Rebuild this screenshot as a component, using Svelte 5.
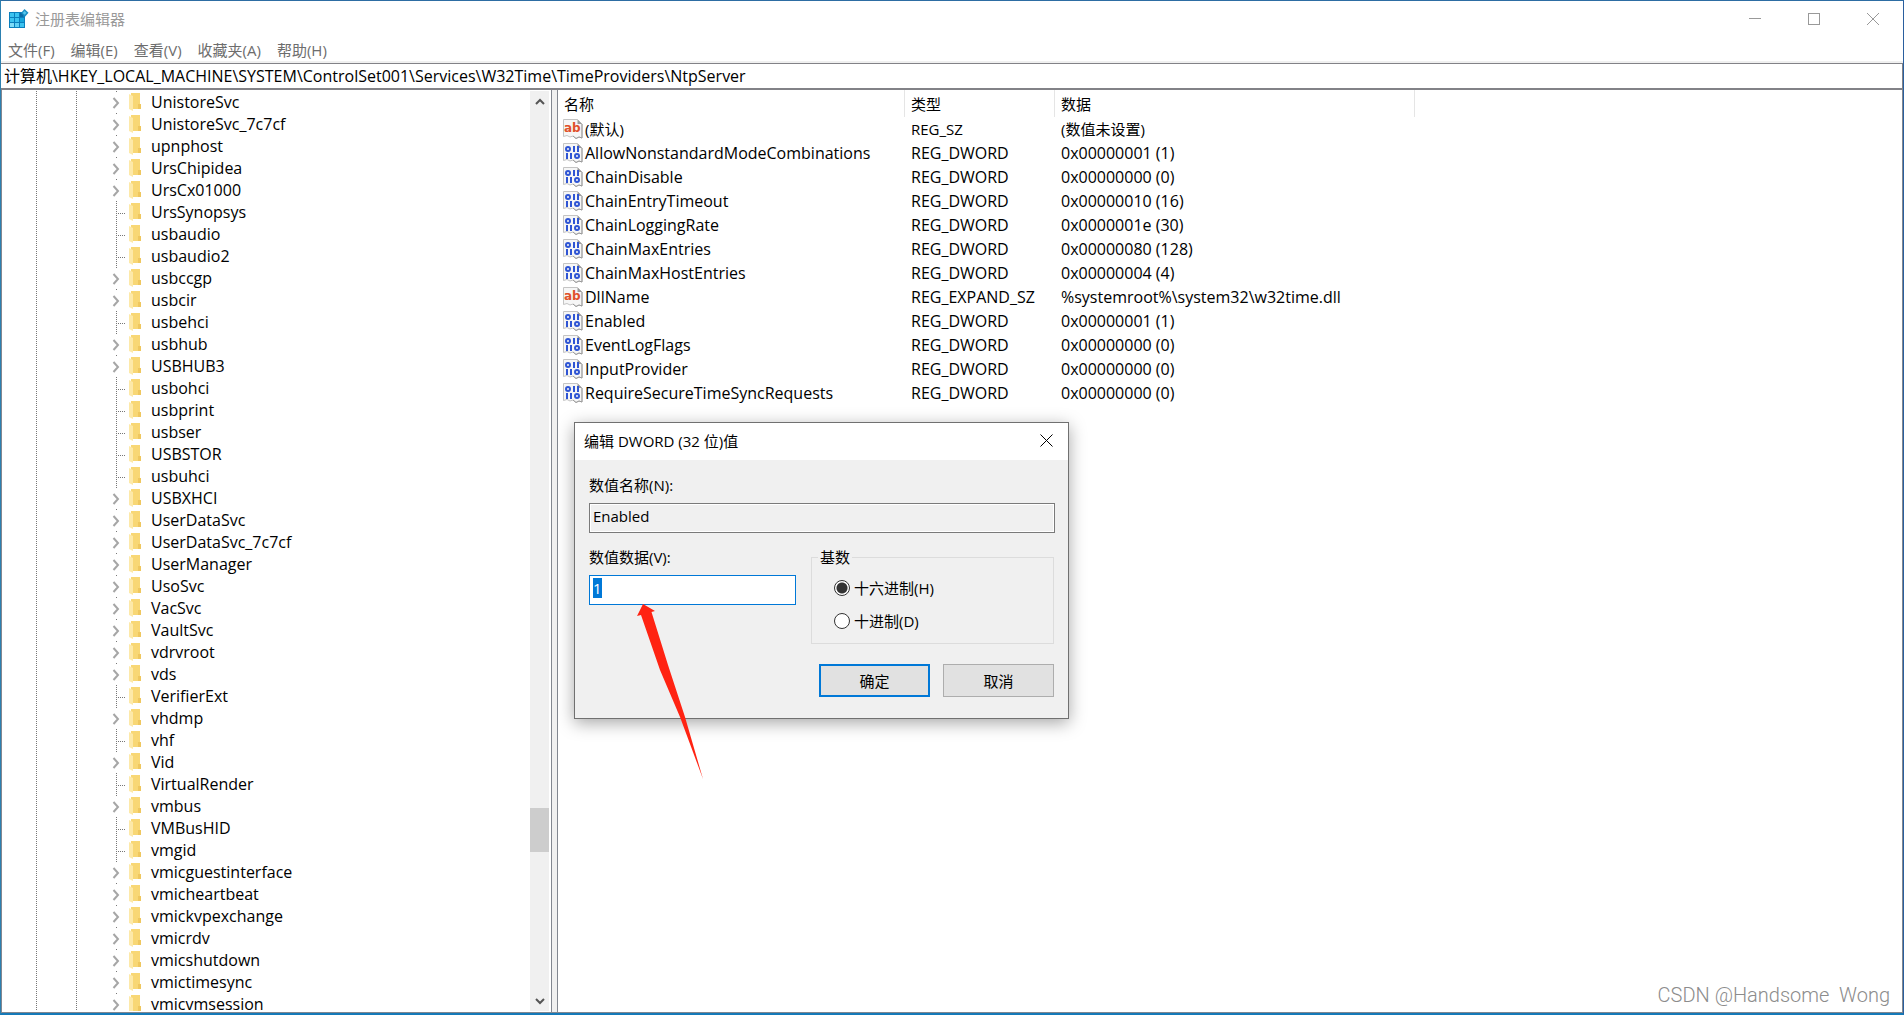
<script>
  import { onMount } from 'svelte';

  let selected = $state('1');
  let base = $state('hex');
  let dataInput;

  const menus = ['文件(F)', '编辑(E)', '查看(V)', '收藏夹(A)', '帮助(H)'];
  const path = '计算机\\HKEY_LOCAL_MACHINE\\SYSTEM\\ControlSet001\\Services\\W32Time\\TimeProviders\\NtpServer';

  // a leading dash marks a key without subkeys
  const keys = `UnistoreSvc UnistoreSvc_7c7cf upnphost UrsChipidea UrsCx01000 -UrsSynopsys
    -usbaudio -usbaudio2 usbccgp usbcir -usbehci usbhub USBHUB3 -usbohci -usbprint -usbser
    -USBSTOR -usbuhci USBXHCI UserDataSvc UserDataSvc_7c7cf UserManager UsoSvc VacSvc VaultSvc
    vdrvroot vds -VerifierExt vhdmp -vhf Vid -VirtualRender vmbus -VMBusHID -vmgid
    vmicguestinterface vmicheartbeat vmickvpexchange vmicrdv vmicshutdown vmictimesync
    vmicvmsession`
    .split(/\s+/)
    .map(k => ({ name: k.replace('-', ''), leaf: k.startsWith('-') }));

  const values = [
    ['(默认)', 'REG_SZ', '(数值未设置)'],
    ['AllowNonstandardModeCombinations', 'REG_DWORD', '0x00000001 (1)'],
    ['ChainDisable', 'REG_DWORD', '0x00000000 (0)'],
    ['ChainEntryTimeout', 'REG_DWORD', '0x00000010 (16)'],
    ['ChainLoggingRate', 'REG_DWORD', '0x0000001e (30)'],
    ['ChainMaxEntries', 'REG_DWORD', '0x00000080 (128)'],
    ['ChainMaxHostEntries', 'REG_DWORD', '0x00000004 (4)'],
    ['DllName', 'REG_EXPAND_SZ', '%systemroot%\\system32\\w32time.dll'],
    ['Enabled', 'REG_DWORD', '0x00000001 (1)'],
    ['EventLogFlags', 'REG_DWORD', '0x00000000 (0)'],
    ['InputProvider', 'REG_DWORD', '0x00000000 (0)'],
    ['RequireSecureTimeSyncRequests', 'REG_DWORD', '0x00000000 (0)'],
  ];

  onMount(() => {
    dataInput.focus();
    dataInput.select();
  });
</script>

<div class="window">
  <header class="titlebar">
    <svg class="app-icon" width="20" height="20" viewBox="0 0 20 20">
      <rect x="0" y="3" width="16" height="16" fill="#0a7fbd" />
      <g fill="#3cc3f0">
        <rect x="1" y="4" width="4" height="4" /><rect x="6" y="4" width="4" height="4" />
        <rect x="1" y="9" width="4" height="4" /><rect x="6" y="9" width="4" height="4" />
        <rect x="1" y="14" width="4" height="4" fill="#7fdcf8" /><rect x="6" y="14" width="4" height="4" fill="#5fd0f5" />
        <rect x="11" y="9" width="4" height="4" fill="#16a5dc" /><rect x="11" y="14" width="4" height="4" />
      </g>
      <path d="M11 4h3v4h-3z" fill="#0a6ba5" />
      <path d="M15.500 0l4 3.800-3.500 4-4-3.800z" fill="#1b8fc4" />
      <path d="M15.500 2l2 1.800-1.800 2-2-1.800z" fill="#55c8ee" />
    </svg>
    <h1>注册表编辑器</h1>
    <div class="controls">
      <button type="button" aria-label="最小化">
        <svg width="12" height="12"><path d="M0 5.500h12" /></svg>
      </button>
      <button type="button" aria-label="最大化">
        <svg width="12" height="12"><rect x=".5" y=".5" width="11" height="11" /></svg>
      </button>
      <button type="button" aria-label="关闭">
        <svg width="12" height="12"><path d="M0 0l12 12M12 0L0 12" /></svg>
      </button>
    </div>
  </header>

  <nav class="menubar">
    {#each menus as menu}
      <button type="button">{menu}</button>
    {/each}
  </nav>

  <input class="address" aria-label="地址" value={path} />

  <main class="panes">
    <section class="tree-pane">
      <ul class="tree">
        {#each keys as key}
          <li>
            <span class="branch" class:leaf={key.leaf}>
              {#if !key.leaf}
                <svg width="8" height="12" viewBox="0 0 8 12"><path d="M1.500 1l4.500 5-4.500 5" /></svg>
              {/if}
            </span>
            <svg class="folder" width="13" height="18" viewBox="0 0 13 18">
              <path d="M2 0h9v11l1 1v4H2z" fill="#f8d775" />
              <path d="M9 11h3v5H9z" fill="#efc75f" />
              <path d="M0 1l4 2v15l-4-2z" fill="#fde9a9" />
            </svg>
            <span>{key.name}</span>
          </li>
        {/each}
      </ul>
      <div class="scrollbar">
        <button type="button" aria-label="向上滚动">
          <svg width="10" height="7" viewBox="0 0 10 7"><path d="M1 6l4-4 4 4" /></svg>
        </button>
        <div class="track"><div class="thumb"></div></div>
        <button type="button" aria-label="向下滚动">
          <svg width="10" height="7" viewBox="0 0 10 7"><path d="M1 1l4 4 4-4" /></svg>
        </button>
      </div>
    </section>

    <section class="list-pane">
      <table>
        <colgroup>
          <col class="col-name" /><col class="col-type" /><col class="col-data" /><col />
        </colgroup>
        <thead>
          <tr><th>名称</th><th>类型</th><th>数据</th><td></td></tr>
        </thead>
        <tbody>
          {#each values as [name, type, data]}
            <tr class:unset={type === 'REG_SZ'}>
              <td>
                <div class="name">
                  <svg width="20" height="20" viewBox="0 0 20 20">
                    <path d="M.5.5h14l4.500 4.500v14l-3-1-3 1.500-3-2.500-3 1-3-1.500-3.500 1z" fill="#f6f6f6" stroke="#c4c4c4" />
                    <path d="M14.500.5L19 5h-4.500z" fill="#9b9b9b" />
                    <path d="M19 5v14l-3-1-3 1.500-3-2.500" fill="none" stroke="#999" />
                    {#if type === 'REG_DWORD'}
                      <g fill="none" stroke="#2f55d4" stroke-width="2">
                        <ellipse cx="5" cy="6" rx="2" ry="2" /><path d="M11 3v6M15 3v6" />
                        <path d="M4 10v6M8 10v6" /><ellipse cx="14" cy="13" rx="2" ry="2" />
                      </g>
                    {:else}
                      <text x="1" y="13" fill="#e0512b">ab</text>
                    {/if}
                  </svg>
                  <span>{name}</span>
                </div>
              </td>
              <td>{type}</td>
              <td>{data}</td>
              <td></td>
            </tr>
          {/each}
        </tbody>
      </table>
    </section>
  </main>

  <form class="dialog" role="dialog" aria-labelledby="dialog-title" onsubmit={(e) => e.preventDefault()}>
    <div class="dialog-title">
      <h2 id="dialog-title">编辑 DWORD (32 位)值</h2>
      <button type="button" aria-label="关闭">
        <svg width="13" height="13"><path d="M.5.5l12 12M12.500.5l-12 12" /></svg>
      </button>
    </div>
    <div class="dialog-body">
      <label for="value-name">数值名称(N):</label>
      <input id="value-name" type="text" value="Enabled" readonly />
      <div class="columns">
        <div class="data">
          <label for="value-data">数值数据(V):</label>
          <input id="value-data" type="text" bind:value={selected} bind:this={dataInput} />
        </div>
        <fieldset>
          <legend>基数</legend>
          <label><input type="radio" value="hex" bind:group={base} />十六进制(H)</label>
          <label><input type="radio" value="dec" bind:group={base} />十进制(D)</label>
        </fieldset>
      </div>
      <div class="actions">
        <button type="submit" class="default">确定</button>
        <button type="button">取消</button>
      </div>
    </div>
    <svg class="arrow" width="68" height="176" viewBox="0 0 68 176">
      <path d="M6 0L18 7l-3.500 1L31 61 48 113 66 175 43 113 23 66 4 11 0 12z" fill="#ff2312" />
    </svg>
  </form>

  <p class="watermark">CSDN @Handsome  Wong</p>
</div>

<style>
  :global(body) {
    margin: 0;
    overflow: hidden;
  }
  .window {
    position: relative;
    display: flex;
    flex-direction: column;
    box-sizing: border-box;
    height: 100vh;
    border: 1px solid;
    border-color: #2d6da3 #2a5f9e #1479b8 #2c80b0;
    border-bottom-width: 2px;
    background: #fff;
    color: #000;
    font: 15px/20px "Open Sans", "Noto Sans CJK SC", sans-serif;
  }
  button, input { font: inherit; color: inherit; }
  button {
    padding: 0;
    border: none;
    background: transparent;
  }
  h1, h2, p, ul {
    margin: 0;
    padding: 0;
    font-size: 15px;
    font-weight: 400;
  }
  .titlebar {
    display: flex;
    align-items: center;
    gap: 6px;
    height: 36px;
    padding: 0 1px 2px 8px;
  }
  .titlebar h1 {
    flex: 1;
    color: #999;
  }
  .controls { display: flex; }
  .controls button {
    width: 59px;
    height: 36px;
  }
  .controls svg {
    display: block;
    margin: 0 auto;
    fill: none;
    stroke: #999;
  }
  .menubar {
    display: flex;
    gap: 16px;
    height: 22px;
    padding-left: 7px;
    border-bottom: 2px solid #f0f0f0;
    color: #6d6d6d;
  }
  .address {
    box-sizing: border-box;
    height: 27px;
    padding: 0 3px 2px;
    border: 1px solid #828287;
    border-width: 1px 1px 2px 0;
    border-radius: 0;
    outline: none;
    font-size: 16px;
  }
  .panes {
    display: flex;
    flex: 1;
    min-height: 0;
    border-bottom: 1px solid #828790;
    background: #f0f0f0;
  }
  .tree-pane {
    display: flex;
    flex: none;
    box-sizing: border-box;
    width: 551px;
    padding: 1px 2px 1px 0;
    border: 1px solid #828790;
    border-width: 0 1px;
    background: #fff;
  }
  .tree {
    flex: 1;
    overflow: hidden;
    list-style: none;
    font-size: 16px;
    background:
      repeating-linear-gradient(#777 0 1px, transparent 1px 2px) 34px 0 / 1px 100% no-repeat,
      repeating-linear-gradient(#777 0 1px, transparent 1px 2px) 74px 0 / 1px 100% no-repeat;
  }
  .tree li {
    display: flex;
    align-items: center;
    height: 22px;
    padding-left: 110px;
    white-space: nowrap;
  }
  .branch {
    display: flex;
    align-items: center;
    width: 17px;
    height: 22px;
    background: linear-gradient(#777, #777) 4px 0 / 1px 1px no-repeat;
  }
  .branch.leaf {
    background:
      repeating-linear-gradient(#777 0 1px, transparent 1px 2px) 4px 0 / 1px 22px no-repeat,
      repeating-linear-gradient(90deg, #777 0 1px, transparent 1px 2px) 4px 12px / 9px 1px no-repeat;
  }
  .branch svg {
    margin-top: 2px;
    fill: none;
    stroke: #a6a6a6;
    stroke-width: 2;
  }
  .folder { margin-right: 9px; }
  .scrollbar {
    display: flex;
    flex-direction: column;
    width: 19px;
    background: #f0f0f0;
  }
  .scrollbar button { height: 20px; }
  .scrollbar svg {
    display: block;
    margin: 0 auto;
    fill: none;
    stroke: #555;
    stroke-width: 2;
  }
  .track {
    display: flex;
    flex: 1;
    flex-direction: column;
    justify-content: end;
    padding-bottom: 139px;
  }
  .thumb {
    height: 44px;
    background: #cdcdcd;
  }
  .list-pane {
    flex: 1;
    margin-left: 5px;
    border: 1px solid #828790;
    border-width: 0 1px;
    background: #fff;
  }
  table {
    width: 100%;
    table-layout: fixed;
    border-collapse: separate;
    border-spacing: 0;
  }
  .col-name { width: 347px; }
  .col-type { width: 150px; }
  .col-data { width: 360px; }
  th {
    height: 27px;
    padding: 0 6px;
    border-right: 1px solid #e5e5e5;
    font-weight: 400;
    text-align: left;
  }
  td {
    height: 24px;
    padding: 0 0 0 6px;
    font-size: 16px;
    white-space: nowrap;
  }
  .unset td { font-size: 15px; }
  .name {
    display: flex;
    align-items: center;
    gap: 2px;
    margin-left: -1px;
  }
  .name text { font: 700 12px "DejaVu Sans", sans-serif; }

  .dialog {
    position: absolute;
    top: 421px;
    left: 573px;
    width: 493px;
    border: 1px solid #707070;
    background: #f0f0f0;
    box-shadow: 0 4px 16px rgba(0, 0, 0, 0.35);
  }
  .dialog-title {
    display: flex;
    align-items: center;
    justify-content: space-between;
    height: 35px;
    padding: 0 15px 2px 9px;
    background: #fff;
  }
  .dialog-title svg {
    display: block;
    fill: none;
    stroke: #000;
  }
  .dialog-body { padding: 15px 13px 21px 14px; }
  .dialog label { display: block; }
  .dialog input[type="text"] {
    display: block;
    box-sizing: border-box;
    width: 100%;
    height: 30px;
    margin-top: 8px;
    padding: 2px 3px 6px;
    border: 1px solid #7a7a7a;
    border-radius: 0;
    outline: none;
    background: #fff;
  }
  .dialog input[readonly] {
    background: #f0f0f0;
    box-shadow: inset 0 0 0 1px #fff;
  }
  .dialog #value-data { border-color: #0078d7; }
  .dialog input::selection {
    background: #0078d7;
    color: #fff;
  }
  .columns {
    display: flex;
    gap: 15px;
    margin-top: 14px;
  }
  .data { width: 207px; }
  fieldset {
    flex: 1;
    height: 97px;
    box-sizing: border-box;
    margin: 0 1px 0 0;
    padding: 11px 22px;
    border: 1px solid #dcdcdc;
  }
  legend {
    margin-left: -16px;
    padding: 0 2px;
  }
  fieldset label {
    display: flex !important;
    align-items: center;
    gap: 4px;
    margin-bottom: 13px;
  }
  input[type="radio"] {
    appearance: none;
    box-sizing: border-box;
    width: 16px;
    height: 16px;
    margin: 0;
    border: 1px solid #333;
    border-radius: 50%;
    background: #fff;
  }
  input[type="radio"]:checked {
    background: radial-gradient(circle, #333 0 5px, #fff 6px);
  }
  .actions {
    display: flex;
    justify-content: end;
    gap: 13px;
    margin: 20px 1px 0 0;
  }
  .actions button {
    box-sizing: border-box;
    width: 111px;
    height: 33px;
    border: 1px solid #adadad;
    background: #e1e1e1;
  }
  .actions .default { border: 2px solid #0078d7; }
  .arrow {
    position: absolute;
    top: 181px;
    left: 62px;
    pointer-events: none;
  }
  .watermark {
    position: absolute;
    right: 13px;
    bottom: 6px;
    color: #8c8c8c;
    font: 300 20px/24px Roboto, sans-serif;
    white-space: pre;
  }
</style>
